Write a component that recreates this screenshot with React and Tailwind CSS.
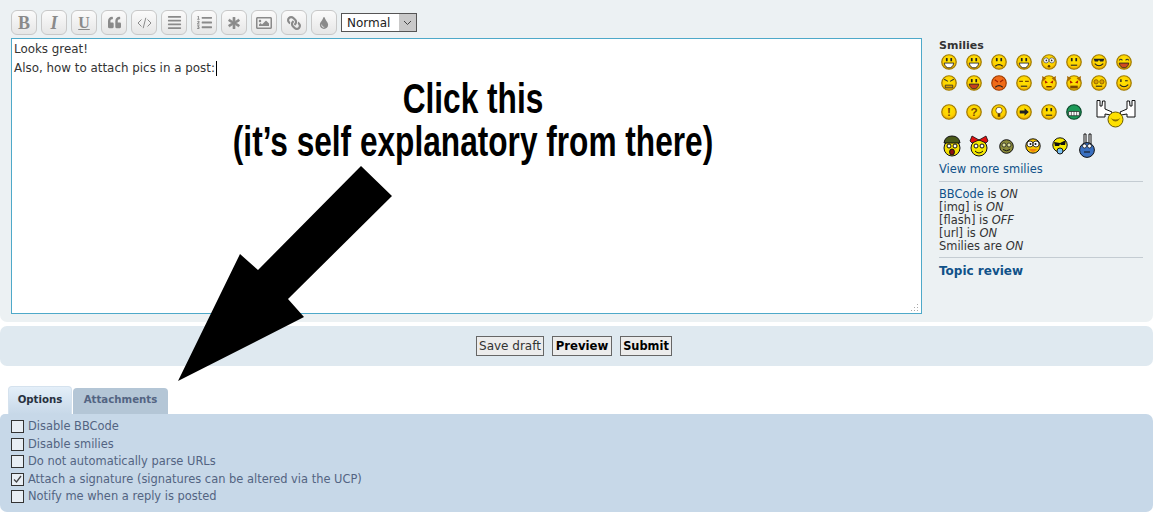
import React from "react";
import {
  FaQuoteLeft,
  FaAlignJustify,
  FaListOl,
  FaAsterisk,
  FaRegImage,
  FaLink,
  FaTint,
} from "react-icons/fa";

const ToolButton = ({ children }) => (
  <div className="flex h-[25px] w-[26px] items-center justify-center rounded-[6px] border border-[#c8c8c8] bg-gradient-to-b from-[#fbfbfb] to-[#e6e6e6] text-[#8a8a8a]">
    {children}
  </div>
);

// base round face used by all the smilies
const Face = ({ fill = "url(#smileGold)", edge = "#a07c00", size = 16, children }) => (
  <svg width={size} height={size} viewBox="0 0 15 15" className="shrink-0">
    <circle cx="7.5" cy="7.5" r="6.8" fill={fill} stroke={edge} strokeWidth="1.1" />
    {children}
  </svg>
);

const Eyes = ({ color = "#222" }) => (
  <>
    <rect x="4.6" y="3.8" width="1.6" height="3" fill={color} />
    <rect x="8.8" y="3.8" width="1.6" height="3" fill={color} />
  </>
);
const Smile = () => <path d="M3.5 9 Q7.5 13 11.5 9" fill="none" stroke="#222" strokeWidth="1" />;
const Grin = ({ fill = "#fff" }) => <path d="M3 8.5 H12 Q11 13 7.5 13 Q4 13 3 8.5Z" fill={fill} stroke="#222" strokeWidth=".8" />;
const Sad = () => <path d="M4 11.5 Q7.5 8.5 11 11.5" fill="none" stroke="#222" strokeWidth="1" />;
const Flat = () => <path d="M4.5 10.5 H10.5" stroke="#222" strokeWidth="1" />;
const RoundEyes = () => (
  <>
    <circle cx="4.8" cy="6" r="2.4" fill="#fff" stroke="#333" strokeWidth=".6" />
    <circle cx="10.2" cy="6" r="2.4" fill="#fff" stroke="#333" strokeWidth=".6" />
    <circle cx="5" cy="6" r=".8" fill="#222" />
    <circle cx="10" cy="6" r=".8" fill="#222" />
  </>
);
const Mark = ({ children }) => (
  <text x="7.5" y="11.5" textAnchor="middle" fontSize="11" fontWeight="700" fontFamily="'Liberation Sans', sans-serif" fill="#7a4a00">
    {children}
  </text>
);
const Ears = () => (
  <>
    <path d="M1 1 L5 3 L1.5 6Z" fill="#a86a00" />
    <path d="M14 1 L10 3 L13.5 6Z" fill="#a86a00" />
  </>
);
const RedEyes = () => (
  <>
    <path d="M3.5 5 L6.5 7 L4 8Z" fill="#b01800" />
    <path d="M11.5 5 L8.5 7 L11 8Z" fill="#b01800" />
  </>
);

const rowOne = [
  <Face><Eyes /><Grin /></Face>,
  <Face><Eyes /><Grin /></Face>,
  <Face><Eyes /><Sad /></Face>,
  <Face><Eyes /><Grin fill="#fff" /></Face>,
  <Face><RoundEyes /><circle cx="7.5" cy="11.5" r="1.2" fill="#5a3a00" /></Face>,
  <Face><Eyes /><Flat /></Face>,
  <Face><path d="M2.5 4.5 H12.5 L11.5 7 H8.5 L7.5 5.5 L6.5 7 H3.5Z" fill="#222" /><Smile /></Face>,
  <Face><path d="M3 6 Q4.5 4 6 6 M9 6 Q10.5 4 12 6" fill="none" stroke="#333" strokeWidth="1" /><Grin fill="#d04a20" /></Face>,
];

const rowTwo = [
  <Face><path d="M3 4 L6.5 6 M12 4 L8.5 6" stroke="#333" strokeWidth="1" /><path d="M4 9.5 H11 V12 H4Z" fill="#d9a000" stroke="#333" strokeWidth=".8" /></Face>,
  <Face><Eyes /><Grin fill="#c8401a" /></Face>,
  <Face fill="#f06a18" edge="#a03c00"><path d="M3.5 4.5 L6.5 6.5 M11.5 4.5 L8.5 6.5" stroke="#a02000" strokeWidth="1" /><Sad /></Face>,
  <Face><path d="M3 6 H6.5 M8.5 6 H12" stroke="#7a4a00" strokeWidth="1" /><Flat /></Face>,
  <Face><Ears /><RedEyes /><path d="M5 11 H10" stroke="#5a2000" strokeWidth="1.2" /></Face>,
  <Face><Ears /><RedEyes /><path d="M4 10 H11 V12.5 H4Z" fill="#7a4a00" /></Face>,
  <Face><circle cx="4.8" cy="6.4" r="2" fill="#d9a000" stroke="#7a4a00" strokeWidth=".7" /><circle cx="10.2" cy="6.4" r="2" fill="#d9a000" stroke="#7a4a00" strokeWidth=".7" /><Flat /></Face>,
  <Face><path d="M4.6 4 V6.6" stroke="#222" strokeWidth="1.3" /><path d="M8.5 5.4 H11" stroke="#222" strokeWidth="1" /><Smile /></Face>,
];

const rowThree = [
  <Face><Mark>!</Mark></Face>,
  <Face><Mark>?</Mark></Face>,
  <Face><circle cx="7.5" cy="6" r="3" fill="#fff" stroke="#5a3a00" strokeWidth=".7" /><rect x="6.3" y="9" width="2.4" height="3" fill="#5a3a00" /></Face>,
  <Face><path d="M3.5 6.2 H8 V4 L12 7.5 L8 11 V8.8 H3.5Z" fill="#222" /></Face>,
  <Face><Eyes /><Flat /></Face>,
  <Face fill="#1c9a58" edge="#0c4a2c"><path d="M2.5 7 H12.5 V11 H2.5Z" fill="#fff" stroke="#222" strokeWidth=".7" /><path d="M5 7 V11 M7.5 7 V11 M10 7 V11" stroke="#222" strokeWidth=".6" /></Face>,
];

const RockOn = () => (
  <svg width="40" height="28" viewBox="0 0 40 28" className="shrink-0">
    <path d="M1 .5 H4 V6 H6 L6.500 1 H9 V9 L16 12 L15 15 L9 14 V17 H1Z" fill="#fff" stroke="#111" strokeWidth="1" />
    <path d="M39 .5 H36 V6 H34 L33.500 1 H31 V9 L24 12 L25 15 L31 14 V17 H39Z" fill="#fff" stroke="#111" strokeWidth="1" />
    <circle cx="19.500" cy="19.500" r="7.500" fill="#fde000" stroke="#6a5a00" strokeWidth="1" />
    <path d="M14.500 18 Q19.500 25 24.500 18 Q19.500 21 14.500 18Z" fill="#8a7000" />
  </svg>
);

const rowFour = [
  <svg width="20" height="22" viewBox="0 0 20 22">
    <circle cx="10" cy="13" r="8" fill="#f5e000" stroke="#111" />
    <path d="M2 8 Q3 1 10 1 Q17 1 18 8Z" fill="#4a5a18" stroke="#111" />
    <circle cx="7" cy="11" r="2" fill="#fff" stroke="#111" />
    <circle cx="13" cy="11" r="2" fill="#fff" stroke="#111" />
    <ellipse cx="10" cy="17" rx="2.4" ry="3" fill="#901010" stroke="#111" />
  </svg>,
  <svg width="20" height="22" viewBox="0 0 20 22">
    <circle cx="10" cy="13" r="8" fill="#f5e800" stroke="#111" />
    <path d="M10 5 L3 1 L1 6 L3 8Z M10 5 L17 1 L19 6 L17 8Z" fill="#e01010" stroke="#111" strokeWidth=".8" />
    <circle cx="7" cy="11" r="2" fill="#fff" stroke="#111" />
    <circle cx="13" cy="11" r="2" fill="#fff" stroke="#111" />
    <path d="M6 16 Q10 20 14 16" fill="none" stroke="#111" />
  </svg>,
  <svg width="15" height="15" viewBox="0 0 15 15">
    <circle cx="7.5" cy="7.5" r="6.8" fill="#8a8a3a" stroke="#111" />
    <circle cx="5" cy="6" r="2" fill="#dde0a0" stroke="#111" strokeWidth=".7" />
    <circle cx="10" cy="6" r="2" fill="#dde0a0" stroke="#111" strokeWidth=".7" />
    <path d="M4 10.5 Q7.5 13 11 10.5" fill="none" stroke="#111" />
  </svg>,
  <svg width="16" height="16" viewBox="0 0 16 16">
    <circle cx="8" cy="8" r="7.2" fill="#f5c400" stroke="#111" />
    <circle cx="5" cy="6" r="3" fill="#fff" stroke="#111" strokeWidth=".8" />
    <circle cx="11" cy="6" r="3" fill="#fff" stroke="#111" strokeWidth=".8" />
    <circle cx="5.5" cy="6" r="1" fill="#111" />
    <circle cx="10.5" cy="6" r="1" fill="#111" />
    <path d="M4 11 H12 Q10 14 8 14 Q6 14 4 11Z" fill="#f08010" />
  </svg>,
  <svg width="16" height="18" viewBox="0 0 16 18">
    <circle cx="8" cy="8" r="7.2" fill="#f5e800" stroke="#111" />
    <path d="M2 5 L8 6 L14 3 L13 8 H9 L8 7 L7 9 H3Z" fill="#111" />
    <circle cx="8" cy="14" r="3" fill="#7ac0f0" stroke="#111" />
  </svg>,
  <svg width="16" height="26" viewBox="0 0 16 26">
    <path d="M5 11 V1 H7 V11 M10 11 V1 H12 V11" fill="#fff" stroke="#111" />
    <circle cx="8" cy="17" r="7.4" fill="#3a70c0" stroke="#111" />
    <circle cx="5.5" cy="13" r="2" fill="#fff" stroke="#111" strokeWidth=".7" />
    <circle cx="10.5" cy="13" r="2" fill="#fff" stroke="#111" strokeWidth=".7" />
    <path d="M5 19 H11" stroke="#111" />
  </svg>,
];

const options = [
  ["Disable BBCode", false],
  ["Disable smilies", false],
  ["Do not automatically parse URLs", false],
  ["Attach a signature (signatures can be altered via the UCP)", true],
  ["Notify me when a reply is posted", false],
];

function App() {
  return (
    <div className="relative h-[526px] w-[1169px] overflow-hidden bg-white font-['DejaVu_Sans',sans-serif] text-[#333]">
      {/* shared gradient for the yellow faces */}
      <svg width="0" height="0" className="absolute">
        <defs>
          <radialGradient id="smileGold" cx="50%" cy="40%" r="60%">
            <stop offset="0%" stopColor="#ffe600" />
            <stop offset="70%" stopColor="#fdd000" />
            <stop offset="100%" stopColor="#e09400" />
          </radialGradient>
        </defs>
      </svg>

      <div className="w-[1153px]">
        {/* editor panel */}
        <div className="flex h-[322px] rounded-b-[7px] bg-[#ecf1f3] pl-[11px] pt-[10px]">
          <div className="w-[911px]">
            <div className="flex h-[28px] items-start gap-[4px]">
              <ToolButton><span className="font-['Liberation_Serif',serif] text-[18px] font-bold leading-none">B</span></ToolButton>
              <ToolButton><span className="font-['Liberation_Serif',serif] text-[18px] font-bold italic leading-none">I</span></ToolButton>
              <ToolButton><span className="font-['Liberation_Serif',serif] text-[16px] font-bold leading-none underline">U</span></ToolButton>
              <ToolButton><FaQuoteLeft size={13} /></ToolButton>
              <ToolButton>
                <svg width="15" height="12" viewBox="0 0 15 12" fill="none" stroke="currentColor" strokeWidth="1">
                  <path d="M4.500 2.500 L1 6 L4.500 9.500 M10.500 2.500 L14 6 L10.500 9.500 M8.800 .8 L6.200 11.200" />
                </svg>
              </ToolButton>
              <ToolButton><FaAlignJustify size={15} /></ToolButton>
              <ToolButton><FaListOl size={15} /></ToolButton>
              <ToolButton><FaAsterisk size={12} stroke="currentColor" strokeWidth={30} /></ToolButton>
              <ToolButton><FaRegImage size={16} /></ToolButton>
              <ToolButton><span className="-scale-x-100"><FaLink size={14} /></span></ToolButton>
              <ToolButton><FaTint size={12} /></ToolButton>
              <div className="mt-[3px] flex h-[19px] w-[76px] items-center border border-[#555] bg-white pl-[5px] text-[12px] text-[#222]">
                <span className="flex-1">Normal</span>
                <span className="flex h-[17px] w-[17px] items-center justify-center bg-[#c9c9c9]">
                  <svg width="9" height="6" viewBox="0 0 9 6"><path d="M1 1 L4.500 4.500 L8 1" fill="none" stroke="#444" strokeWidth="1" /></svg>
                </span>
              </div>
            </div>
            <div className="relative h-[276px] border border-[#4ea9c9] bg-white px-[2px] pt-[1px] text-[11.9px] leading-[19px] text-[#333]">
              <div>Looks great!</div>
              <div className="flex items-center">
                Also, how to attach pics in a post:
                <span className="ml-[1px] h-[15px] w-px bg-black" />
              </div>
              <svg width="9" height="9" viewBox="0 0 9 9" className="absolute bottom-[1px] right-[2px]">
                <path d="M7 1h1v1H7zM4 4h1v1H4zM7 4h1v1H7zM1 7h1v1H1zM4 7h1v1H4zM7 7h1v1H7z" fill="#aaa" />
              </svg>
            </div>
          </div>

          {/* sidebar */}
          <div className="ml-[17px] w-[204px] pt-[30px] text-[11.45px] leading-[13px]">
            <div className="font-bold text-[11px] leading-[12px] text-[#333]">Smilies</div>
            <div className="-mt-[1px] pl-[2px]">
              <div className="grid h-[21px] grid-cols-[repeat(8,25px)] items-center">{rowOne.map((s, i) => <span key={i}>{s}</span>)}</div>
              <div className="grid h-[21px] grid-cols-[repeat(8,25px)] items-center">{rowTwo.map((s, i) => <span key={i}>{s}</span>)}</div>
              <div className="flex h-[38px] items-center">
                <div className="grid grid-cols-[repeat(6,25px)] items-center">{rowThree.map((s, i) => <span key={i}>{s}</span>)}</div>
                <span className="ml-[5px] mt-[3px]"><RockOn /></span>
              </div>
              <div className="ml-[1px] flex h-[30px] w-[170px] items-center gap-[7px]">
                {rowFour.map((s, i) => <span key={i} className="flex w-[20px] justify-center">{s}</span>)}
              </div>
            </div>
            <a className="mt-[2px] block text-[#105289]">View more smilies</a>
            <div className="mt-[5px] h-px bg-[#c4ccd2]" />
            <div className="mt-[6px]">
              <div><a className="text-[#105289]">BBCode</a> is <em>ON</em></div>
              <div>[img] is <em>ON</em></div>
              <div>[flash] is <em>OFF</em></div>
              <div>[url] is <em>ON</em></div>
              <div>Smilies are <em>ON</em></div>
            </div>
            <div className="mt-[4px] h-px bg-[#c4ccd2]" />
            <div className="mt-[7px] text-[12px] font-bold text-[#105289]">Topic review</div>
          </div>
        </div>

        {/* submit buttons */}
        <div className="mt-[4px] flex h-[40px] items-center justify-center gap-[8px] rounded-[7px] bg-[#dfe9f0] pr-[5px] text-[12px] text-black">
          <div className="flex h-[20px] w-[68px] items-center justify-center border border-[#666] bg-[#ececec] text-[#333]">Save draft</div>
          <div className="flex h-[20px] w-[60px] items-center justify-center border border-[#666] bg-[#ececec] pt-[1px] text-[11.7px] font-bold">Preview</div>
          <div className="flex h-[20px] w-[52px] items-center justify-center border border-[#666] bg-[#ececec] pt-[1px] text-[11.4px] font-bold">Submit</div>
        </div>

        {/* tabs */}
        <div className="mt-[20px] flex h-[28px] items-end gap-px pl-[8px] text-[10.2px] font-bold">
          <div className="flex h-[28px] w-[64px] items-center justify-center rounded-t-[4px] border border-b-0 border-[#d5e2ee] bg-gradient-to-b from-[#e4eff9] to-[#c7d8e8] pb-[2px] text-[#28313f]">Options</div>
          <div className="flex h-[26px] w-[95px] items-center justify-center rounded-t-[4px] bg-[#b4c6d6] pb-[2px] text-[#536482]">Attachments</div>
        </div>
        <div className="h-[98px] rounded-[7px] rounded-tl-[5px] bg-[#c7d8e8] pl-[11px] pt-[4px] text-[11.45px] text-[#536482]">
          {options.map(([label, checked]) => (
            <label key={label} className="flex h-[17.5px] items-center gap-[4px]">
              <span className="flex h-[13px] w-[13px] items-center justify-center border border-[#333] bg-[#e8eef4]">
                {checked && (
                  <svg width="11" height="11" viewBox="0 0 11 11"><path d="M2 5.500 L4.500 8 L9 2" fill="none" stroke="#444" strokeWidth="1.3" /></svg>
                )}
              </span>
              {label}
            </label>
          ))}
        </div>
      </div>

      {/* annotation drawn over the form */}
      <div className="absolute left-[123px] top-[77px] w-[700px] scale-x-[0.753] whitespace-nowrap text-center font-['Liberation_Sans',sans-serif] text-[42px] font-bold leading-[43px] text-black">
        <div>Click this</div>
        <div>(it’s self explanatory from there)</div>
      </div>
      <svg width="1169" height="526" className="pointer-events-none absolute left-0 top-0">
        <polygon points="178,381 240,254 258,270 361,166 392,196 288,299 304,317" fill="#000" />
      </svg>
    </div>
  );
}

export default App;
